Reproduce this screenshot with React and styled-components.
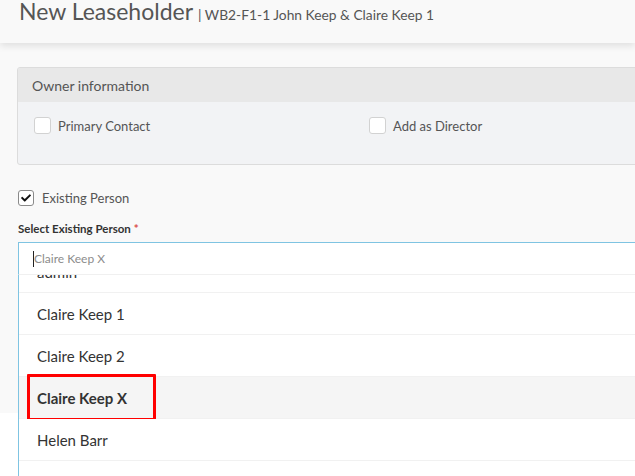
import React from 'react';
import styled, { createGlobalStyle } from 'styled-components';
import { FaCheck } from 'react-icons/fa';

const GlobalStyle = createGlobalStyle`
  html, body {
    margin: 0;
    padding: 0;
    background: #ffffff;
    font-family: Lato, 'Open Sans', sans-serif;
    overflow: hidden;
  }
  * {
    box-sizing: border-box;
  }
`;

const Page = styled.div`
  width: 635px;
  height: 476px;
  overflow: hidden;
  background: #ffffff;
`;

const Header = styled.header`
  position: relative;
  z-index: 2;
  height: 43px;
  padding-left: 19px;
  background: #f9f9f9;
  box-shadow: 0 3px 7px rgba(0, 0, 0, 0.1);
  display: flex;
  align-items: flex-start;
`;

const Title = styled.h1`
  margin: 0;
  font-size: 23px;
  line-height: 22px;
  font-weight: 400;
  color: #555;
  white-space: nowrap;
  span {
    font-size: 13.8px;
    color: #555;
    margin-left: 5px;
  }
`;

const Main = styled.main`
  height: 370px;
  padding: 24px 0 0 17px;
  background: #f9f9f9;
`;

const Panel = styled.section`
  width: 720px;
  border: 1px solid #dcdcdc;
  border-radius: 3px;
  background: #f2f3f5;
  overflow: hidden;
`;

const PanelHeading = styled.div`
  height: 34px;
  padding-left: 14px;
  display: flex;
  align-items: center;
  background: #e8e8e8;
  color: #555;
  font-size: 14px;
`;

const PanelBody = styled.div`
  height: 62px;
  padding: 15px 0 0 16px;
  display: grid;
  grid-template-columns: 335px 335px;
  align-items: start;
`;

const CheckRow = styled.label`
  display: flex;
  align-items: center;
  gap: ${(p) => p.$gap || 7}px;
  font-size: 13px;
  color: #555;
  margin-left: ${(p) => p.$indent || 0}px;
`;

const Box = styled.span`
  width: ${(p) => p.$size}px;
  height: ${(p) => p.$size}px;
  flex: none;
  display: flex;
  align-items: center;
  justify-content: center;
  background: #fff;
  border: 1px solid ${(p) => (p.$checked ? '#8a8a8a' : '#d2d2d2')};
  border-radius: 3px;
  color: #111;
`;

const ExistingWrap = styled.div`
  margin-top: 25px;
`;

const FieldLabel = styled.div`
  margin-top: 16px;
  font-size: 11.5px;
  font-weight: 700;
  color: #333;
  margin-left: 1px;
  b {
    color: #d9534f;
    margin-left: 3px;
  }
`;

const Select = styled.div`
  position: relative;
  z-index: 3;
  margin-top: 7px;
  margin-left: 1px;
  width: 700px;
`;

const SearchBox = styled.div`
  height: 33px;
  display: flex;
  align-items: center;
  padding-left: 14px;
  background: #fff;
  border: 1px solid #7fc4e2;
  border-bottom: 1px solid #f0f0f0;
  font-size: 12px;
  color: #8c8c8c;
`;

const Caret = styled.span`
  width: 1px;
  height: 16px;
  background: #222;
`;

const Menu = styled.div`
  position: absolute;
  top: 100%;
  left: 0;
  right: 0;
  height: 260px;
  overflow: hidden;
  background: #fff;
  border-left: 1px solid #7fc4e2;
  border-right: 1px solid #7fc4e2;
`;

const Options = styled.ul`
  list-style: none;
  margin: -24px 0 0;
  padding: 0;
`;

const Option = styled.li`
  position: relative;
  height: 42px;
  padding-left: 18px;
  display: flex;
  align-items: center;
  border-bottom: 1px solid #f1f1f1;
  font-size: 15px;
  color: #333;
  background: ${(p) => (p.$active ? '#f5f5f5' : '#fff')};
  font-weight: ${(p) => (p.$active ? 700 : 400)};
`;

const Mark = styled.span`
  position: absolute;
  left: 8px;
  top: -3px;
  width: 129px;
  height: 47px;
  border: 3px solid #f00;
  border-radius: 1px;
`;

const people = ['admin', 'Claire Keep 1', 'Claire Keep 2', 'Claire Keep X', 'Helen Barr', ''];

export default function App() {
  return (
    <Page>
      <GlobalStyle />
      <Header>
        <Title>
          New Leaseholder<span>| WB2-F1-1 John Keep &amp; Claire Keep 1</span>
        </Title>
      </Header>
      <Main>
        <Panel>
          <PanelHeading>Owner information</PanelHeading>
          <PanelBody>
            <CheckRow>
              <Box $size={17} />
              Primary Contact
            </CheckRow>
            <CheckRow>
              <Box $size={17} />
              Add as Director
            </CheckRow>
          </PanelBody>
        </Panel>
        <ExistingWrap>
          <CheckRow $indent={1} $gap={8}>
            <Box $size={16} $checked>
              <FaCheck size={10} />
            </Box>
            Existing Person
          </CheckRow>
        </ExistingWrap>
        <FieldLabel>
          Select Existing Person<b>*</b>
        </FieldLabel>
        <Select>
          <SearchBox>
            <Caret />
            Claire Keep X
          </SearchBox>
          <Menu>
            <Options>
              {people.map((name, i) => (
                <Option key={i} $active={name === 'Claire Keep X'}>
                  {name}
                  {name === 'Claire Keep X' && <Mark />}
                </Option>
              ))}
            </Options>
          </Menu>
        </Select>
      </Main>
    </Page>
  );
}
